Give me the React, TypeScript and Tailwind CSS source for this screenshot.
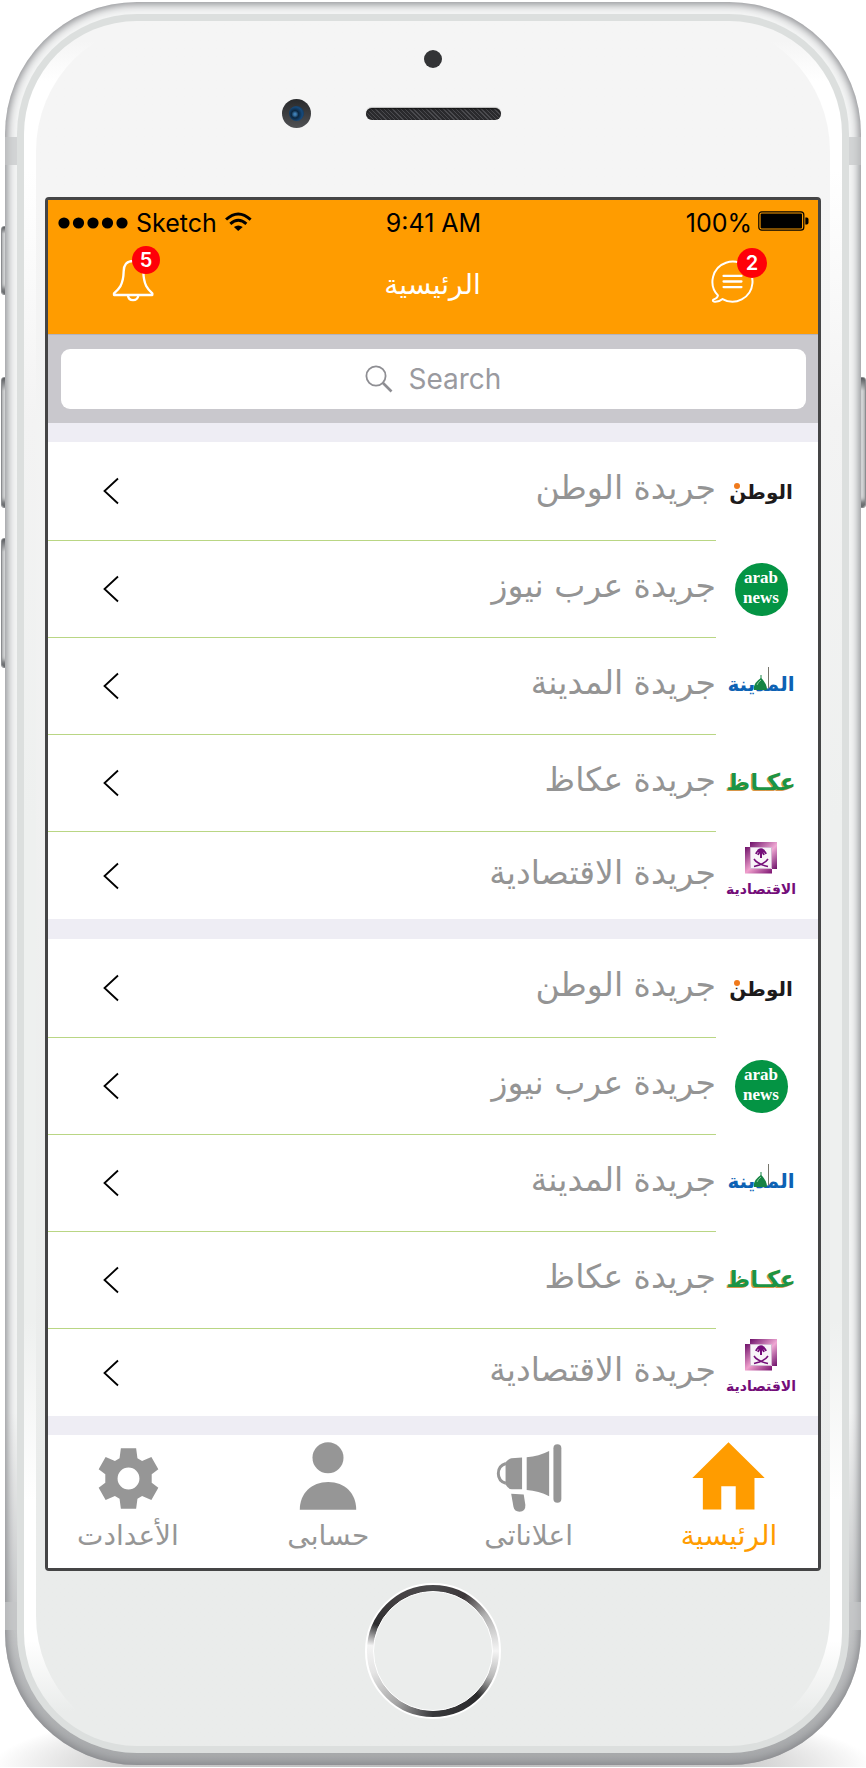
import type { ReactNode } from 'react'

const ARABIC = "font-['DejaVu_Sans',sans-serif]"

function SignalDots() {
  return (
    <svg viewBox="0 0 70 12" className="h-3 w-[70px]" aria-hidden="true">
      {[6, 20.5, 35, 49.5, 64].map((x) => (
        <circle key={x} cx={x} cy="6" r="5.6" />
      ))}
    </svg>
  )
}

function WifiIcon() {
  return (
    <svg viewBox="588 60 82 58" className="mb-1 h-[19px] w-[27px]" fill="none" stroke="black" aria-hidden="true">
      <path d="M591 83Q628 49 666 83" strokeWidth="9" />
      <path d="M604 96Q628 74 653 96" strokeWidth="9" />
      <path d="M615 106Q628 96 642 106L628 118Z" fill="black" stroke="none" />
    </svg>
  )
}

function BatteryIcon() {
  return (
    <svg viewBox="0 0 51 20" className="mb-1 h-5 w-[51px]" aria-hidden="true">
      <rect x="0.8" y="0.8" width="45" height="18.4" rx="3" fill="none" stroke="black" strokeWidth="1.2" />
      <rect x="2.6" y="2.6" width="41.4" height="14.8" rx="1" />
      <path d="M47.3 6.5h1.5q1.7 0 1.7 2v3q0 2-1.7 2h-1.5z" />
    </svg>
  )
}

function BellIcon() {
  return (
    <svg viewBox="246 208 126 126" className="size-[42px]" fill="none" stroke="white" strokeWidth="7" strokeLinejoin="round" aria-hidden="true">
      <path d="M309 211C290 211 281 222 281 242C280 284 266 296 252 308V313H367V308C353 296 341 284 340 242C339 222 328 211 309 211Z" />
      <path d="M294 315C296 333 322 333 325 315" />
    </svg>
  )
}

function ChatIcon() {
  return (
    <svg viewBox="331 210 130 130" className="size-[43px]" fill="none" stroke="white" strokeWidth="6" strokeLinecap="round" strokeLinejoin="round" aria-hidden="true">
      <path d="M352 317A60.500 60.500 0 1 1 366 328Q356 337 342 336Q334 335 338 330Q351 325 352 317Z" />
      <path d="M369 258H423M369 275H423M369 292H423" strokeWidth="7" />
    </svg>
  )
}

function SearchIcon() {
  return (
    <svg viewBox="0 0 28 28" className="size-7" fill="none" stroke="#8e8e93" aria-hidden="true">
      <circle cx="11" cy="11" r="9.600" strokeWidth="1.800" />
      <path d="M18 18L26.500 26.500" strokeWidth="2.600" />
    </svg>
  )
}

function Chevron() {
  return (
    <svg viewBox="0 0 16 30" className="h-[30px] w-4" fill="none" stroke="black" strokeWidth="1.800" aria-hidden="true">
      <path d="M15 2.500L1.500 15L15 27.500" />
    </svg>
  )
}

function GearIcon() {
  return (
    <svg viewBox="-92 -92 184 184" className="mt-1 size-[61px]" fill="currentColor" aria-hidden="true">
      <path
        fillRule="evenodd"
        d="M-23-91H23L27-61L41-53L69-65L90-28L70-13V13L90 28L69 65L41 53L27 61L23 91H-23L-27 61L-41 53L-69 65L-90 28L-70 13V-13L-90-28L-69-65L-41-53L-27-61ZM0-33A33 33 0 1 0 0 33A33 33 0 1 0 0-33Z"
      />
    </svg>
  )
}

function PersonIcon() {
  return (
    <svg viewBox="901 125 173 206" className="h-[68px] w-[58px]" fill="currentColor" aria-hidden="true">
      <circle cx="987.500" cy="173" r="47" />
      <path d="M902 330C902 281 937 246 988 246S1073 281 1073 330Z" />
    </svg>
  )
}

function MegaphoneIcon() {
  return (
    <svg viewBox="190 131 200 206" className="mt-1 h-[68px] w-[66px]" fill="currentColor" aria-hidden="true">
      <rect x="364" y="132" width="24" height="177" rx="12" />
      <path d="M283 171Q320 168 351 152V289Q320 272 283 270Z" />
      <path d="M269 172L237 174Q230 175 219 186V254Q227 268 238 268H269Z" />
      <path d="M220 190Q197 197 197 220T220 250" fill="none" stroke="currentColor" strokeWidth="9" />
      <path d="M236 282L274 284L279 316Q280 336 261 336Q246 336 243 322Z" />
    </svg>
  )
}

function HomeIcon() {
  return (
    <svg viewBox="779 125 222 206" className="h-[68px] w-[73px]" fill="currentColor" aria-hidden="true">
      <path d="M890 125L1000 234H969V330H912V259H868V330H812V234H780Z" />
    </svg>
  )
}

function WatanLogo() {
  return (
    <span className="relative text-[20px] leading-8 font-bold text-[#1c1a1b]">
      الوطن
      <span className="absolute top-[7px] left-[5px] size-1.5 rounded-full bg-[#f07a1c]" />
    </span>
  )
}

function ArabNewsLogo() {
  return (
    <span
      dir="ltr"
      className="flex size-[53px] items-center justify-center rounded-full bg-[#049444] pb-1 text-center font-['Liberation_Serif',serif] text-[17px] leading-5 font-bold text-white"
    >
      arab
      <br />
      news
    </span>
  )
}

function MadinaLogo() {
  return (
    <span className="relative pb-1.5 text-[20px] leading-8 font-bold text-[#0d62b4]">
      المدينة
      <svg viewBox="0 0 18 30" className="absolute -top-1 left-[26px] h-[30px] w-[18px]" aria-hidden="true">
        <path d="M1 26Q0 19 8 14Q14 19 14 26Z" fill="#168344" />
        <path d="M4 21Q5 18 8 16" stroke="#8ccf9f" fill="none" />
        <path d="M15.500 3V24" stroke="#77766c" />
        <path d="M8 11V15" stroke="#168344" />
      </svg>
    </span>
  )
}

function OkazLogo() {
  return (
    <span className="pb-1 text-[23px] leading-8 font-bold text-[#1c9444] [text-shadow:-1px_1px_0_#d8964a]">
      عكـاظ
    </span>
  )
}

function EqtisadiahLogo() {
  return (
    <span className="flex flex-col items-center pb-3 text-[#740d79]">
      <svg viewBox="0 0 34 34" className="size-[34px]" aria-hidden="true">
        <defs>
          <linearGradient id="topFrame" x1="0" y1="0" x2="1" y2="1">
            <stop offset="0" stopColor="#6d1069" />
            <stop offset=".55" stopColor="#f0a9d4" />
            <stop offset="1" stopColor="#6d1069" />
          </linearGradient>
          <linearGradient id="bottomFrame" x1="0" y1="0" x2="1" y2="1">
            <stop offset="0" stopColor="#6d1069" />
            <stop offset=".5" stopColor="#f0a0cd" />
            <stop offset="1" stopColor="#7b1271" />
          </linearGradient>
        </defs>
        <path d="M6 1H33V28H28V6H6Z" fill="url(#topFrame)" />
        <path d="M1 6H6V28H28V32.500H1Z" fill="url(#bottomFrame)" />
        <rect x="6.500" y="6.500" width="21" height="21" fill="#f8f3f8" stroke="#b98ab7" strokeWidth=".6" />
        <g stroke="#740d79" fill="none">
          <path d="M17 17V11" strokeWidth="2" />
          <path d="M12 13Q13 9 17 10Q21 9 22 13M13.500 10Q17 6.500 20.500 10M14 14Q15 11 17 11Q19 11 20 14" strokeWidth="1.800" />
          <path d="M10 18Q13 23 24 25.500M24 18Q21 23 10 25.500" strokeWidth="1.500" />
        </g>
      </svg>
      <span className="mt-1 text-[14px] leading-5 font-bold whitespace-nowrap">الاقتصادية</span>
    </span>
  )
}

type Paper = { name: string; logo: ReactNode; height: string }

const papers: Paper[] = [
  { name: 'جريدة الوطن', logo: <WatanLogo />, height: 'h-[99px]' },
  { name: 'جريدة عرب نيوز', logo: <ArabNewsLogo />, height: 'h-[97px]' },
  { name: 'جريدة المدينة', logo: <MadinaLogo />, height: 'h-[97px]' },
  { name: 'جريدة عكاظ', logo: <OkazLogo />, height: 'h-[97px]' },
  { name: 'جريدة الاقتصادية', logo: <EqtisadiahLogo />, height: 'h-[87px]' },
]

function PaperList() {
  return (
    <ul dir="rtl" className="bg-white">
      {papers.map((p, i) => (
        <li key={p.name}>
          <a href="#paper" className={`flex ${p.height}`}>
            <span className="flex w-[102px] shrink-0 items-center justify-center pr-3">{p.logo}</span>
            <span
              className={`flex flex-1 items-center justify-between pl-[55px] ${
                i < papers.length - 1 ? 'border-b border-[#b9d684]' : ''
              }`}
            >
              <span className="pb-1.5 text-[33px] leading-10 whitespace-nowrap text-[#949494]">{p.name}</span>
              <Chevron />
            </span>
          </a>
        </li>
      ))}
    </ul>
  )
}

function Tab({ label, icon, active }: { label: string; icon: ReactNode; active?: boolean }) {
  return (
    <button type="button" className={`flex w-[120px] flex-col items-center ${active ? 'text-[#ff9c00]' : 'text-[#969696]'}`}>
      <span className="flex h-[68px] items-center">{icon}</span>
      <span className="mt-2 text-[28px] leading-9 whitespace-nowrap">{label}</span>
    </button>
  )
}

function SideButton({ place }: { place: string }) {
  return (
    <span
      className={`absolute w-2 rounded-[3px] border border-[#8b8d90] bg-linear-to-b from-[#55585b] via-[#e6e8e8] via-10% to-[#e6e8e8] to-90% shadow-[inset_0_-6px_4px_#6b6d70] ${place}`}
    />
  )
}

function AntennaBand({ place }: { place: string }) {
  return <span className={`absolute h-7 w-3 bg-[#c4c6c8]/70 ${place}`} />
}

export default function App() {
  return (
    <div className="relative overflow-hidden bg-white bg-[radial-gradient(ellipse_at_bottom,#bbbbbb_0%,#cccccc_50%,transparent_72%)] bg-[length:100%_70px] bg-bottom bg-no-repeat px-[5px] pt-[2px] pb-[2px]">
      <SideButton place="left-px top-[226px] h-[69px]" />
      <SideButton place="left-px top-[377px] h-[131px]" />
      <SideButton place="left-px top-[538px] h-[130px]" />
      <SideButton place="right-0 top-[377px] h-[131px]" />

      <div className="relative rounded-[132px] bg-linear-to-b from-[#f3f4f4] from-80% to-[#a6a8aa] p-3 shadow-[inset_0_0_8px_2px_#85868a]">
        <AntennaBand place="left-0 top-[135px]" />
        <AntennaBand place="right-0 top-[135px]" />
        <AntennaBand place="left-0 bottom-[135px]" />
        <AntennaBand place="right-0 bottom-[135px]" />

        <div className="relative rounded-[120px] bg-[#dcdfde] p-[7px]">
          <div className="rounded-[113px] bg-[linear-gradient(to_bottom,#f5f5f5_20px,#ffffff_60px,#ffffff_150px,#f3f3f3_400px,#eef0ef_800px,#eef0ef_1300px,#ffffff_1480px,#ffffff_1620px,#eaeceb_1690px)] px-3">
            <main className="flex flex-col items-center rounded-[130px] bg-linear-to-b from-[#f5f5f5] from-10% to-[#eaeceb] to-85% px-[9px] pt-[29px] pb-[27px]">
              <span className="size-[18px] rounded-full bg-[#333436]" />
              <div className="mt-[31px] mb-[69px] grid w-full grid-cols-[1fr_auto_1fr] items-center">
                <span className="mr-[55px] flex size-[29px] items-center justify-center justify-self-end rounded-full bg-linear-to-b from-[#28292b] to-[#505154]">
                  <span className="size-[15px] rounded-full bg-[radial-gradient(circle_at_40%_55%,#3f7fb5_8%,#0c2740_30%,#164a7c_60%,#122334_100%)]" />
                </span>
                <span className="h-3 w-[135px] rounded-full bg-[repeating-linear-gradient(45deg,#2a2a2d_0_2px,#4a4a4e_2px_3px)] shadow-[0_-1px_1px_#bbb,inset_0_1px_2px_#111]" />
              </div>

              <div className={`w-full rounded-[4px] border-3 border-[#454546] bg-[#eeedf4] ${ARABIC}`}>
                <header className="bg-[#ff9c00]">
                  <div className="grid h-11 grid-cols-3 items-center pt-0.5 pr-[9px] pl-[10px] font-[Inter,sans-serif] text-[25px] leading-8 text-black">
                    <div className="flex items-center gap-2">
                      <SignalDots />
                      <span>Sketch</span>
                      <WifiIcon />
                    </div>
                    <span className="text-center">9:41 AM</span>
                    <div className="flex items-center justify-end gap-[6px]">
                      <span>100%</span>
                      <BatteryIcon />
                    </div>
                  </div>
                  <div className="flex h-[90px] items-center justify-between px-16 pb-4">
                    <button type="button" aria-label="5" className="relative">
                      <BellIcon />
                      <span className="absolute -top-[14px] -right-1.5 flex size-7 items-center justify-center rounded-full bg-[#ff0008] font-[Inter,sans-serif] text-[20px] leading-6 font-semibold text-white">
                        5
                      </span>
                    </button>
                    <h1 className="pt-2 text-[28px] leading-9 text-white">الرئيسية</h1>
                    <button type="button" aria-label="2" className="relative">
                      <ChatIcon />
                      <span className="absolute -top-3 -right-[13px] flex size-[30px] items-center justify-center rounded-full bg-[#ff0008] font-[Inter,sans-serif] text-[20px] leading-6 font-semibold text-white">
                        2
                      </span>
                    </button>
                  </div>
                </header>

                <div className="border-t border-[#b3b3bf] bg-[#c9c8cd] pt-[14px] pr-3 pb-[14px] pl-[13px]">
                  <label className="flex h-[60px] items-center justify-center gap-4 rounded-[9px] bg-white pl-6">
                    <SearchIcon />
                    <input
                      type="text"
                      placeholder="Search"
                      aria-label="Search"
                      className="w-[118px] bg-transparent font-[Inter,sans-serif] text-[28px] leading-9 outline-none placeholder:text-[#9a9a9f]"
                    />
                  </label>
                </div>

                <div className="flex flex-col gap-5 pt-[19px] pb-[19px]">
                  <PaperList />
                  <PaperList />
                </div>

                <nav className="flex h-[133px] items-start justify-between bg-white pt-[7px] pr-[29px] pl-5">
                  <Tab label="الأعدادت" icon={<GearIcon />} />
                  <Tab label="حسابى" icon={<PersonIcon />} />
                  <Tab label="اعلاناتى" icon={<MegaphoneIcon />} />
                  <Tab label="الرئيسية" icon={<HomeIcon />} active />
                </nav>
              </div>

              <button
                type="button"
                aria-label="Home"
                className="mt-3 size-[136px] rounded-full border-2 border-white bg-[conic-gradient(#4a4a4c,#3c3739_30deg,#b0b0b0_55deg,#f4f4f4_90deg,#b5b5b5_115deg,#2a2a2c_135deg,#38383b_180deg,#a5a5a5_215deg,#e4e4e4_250deg,#f4f4f4_275deg,#2d2d2f_295deg,#474345_330deg,#4a4a4c)] bg-origin-border p-[6px]"
              >
                <span className="block size-full rounded-full border border-white bg-[#ebedec]" />
              </button>
            </main>
          </div>
        </div>
      </div>
    </div>
  )
}
